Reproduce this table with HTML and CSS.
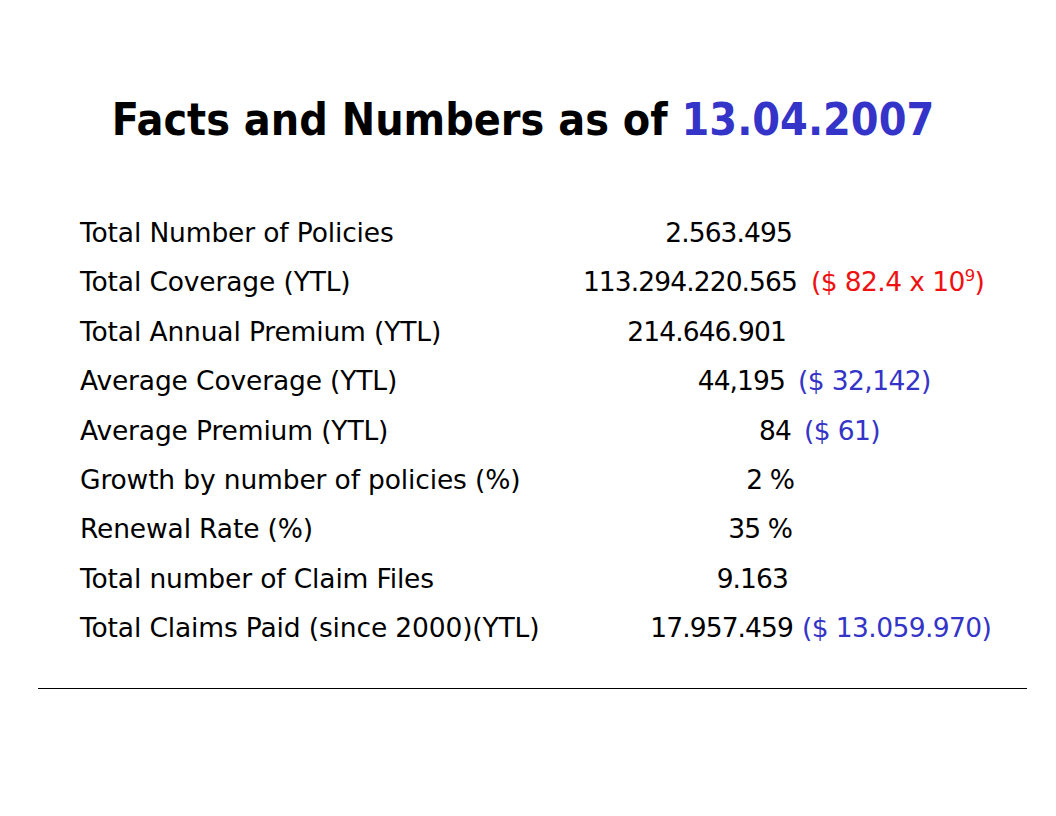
FILE: index.html
```html
<!DOCTYPE html>
<html>
<head>
<meta charset="utf-8">
<title>Facts and Numbers</title>
<link rel="stylesheet" href="styles.css">
</head>
<body>
<div class="slide">
  <h1 class="title">Facts and Numbers as of <span class="date">13.04.2007</span></h1>
  <div class="facts">
    <div class="label">Total Number of Policies</div>
    <div class="num">2.563.495</div>
    <div class="extra"></div>

    <div class="label">Total Coverage (YTL)</div>
    <div class="num shift-r5">113.294.220.565</div>
    <div class="extra red gap-19">($ 82.4 x 10<sup>9</sup>)</div>

    <div class="label">Total Annual Premium (YTL)</div>
    <div class="num shift-l6">214.646.901</div>
    <div class="extra"></div>

    <div class="label">Average Coverage (YTL)</div>
    <div class="num shift-l7">44,195</div>
    <div class="extra blue gap-6">($ 32,142)</div>

    <div class="label">Average Premium (YTL)</div>
    <div class="num shift-l1">84</div>
    <div class="extra blue gap-12">($ 61)</div>

    <div class="label">Growth by number of policies (%)</div>
    <div class="num shift-r2">2 %</div>
    <div class="extra"></div>

    <div class="label">Renewal Rate (%)</div>
    <div class="num">35 %</div>
    <div class="extra"></div>

    <div class="label">Total number of Claim Files</div>
    <div class="num shift-l4">9.163</div>
    <div class="extra"></div>

    <div class="label">Total Claims Paid (since 2000)(YTL)</div>
    <div class="num shift-r1">17.957.459</div>
    <div class="extra blue">($ 13.059.970)</div>
  </div>
  <hr class="rule">
</div>
</body>
</html>
```
FILE: styles.css
```css
html, body {
  margin: 0;
  padding: 0;
  background: #ffffff;
}

.slide {
  width: 1056px;
  height: 816px;
  padding-top: 98px;
  box-sizing: border-box;
  color: #000;
}

.title {
  margin: 0;
  padding-right: 10px;
  text-align: center;
  font-family: "DejaVu Sans Condensed", "DejaVu Sans", sans-serif;
  font-weight: bold;
  font-size: 44.4px;
  line-height: 44px;
  color: #000;
}

.date {
  color: #3434c8;
}

.facts {
  display: grid;
  grid-template-columns: 480px 232px auto;
  grid-auto-rows: 49.4px;
  margin-top: 66px;
  padding-left: 80px;
  font-family: "DejaVu Sans", sans-serif;
  font-size: 26.5px;
  line-height: 49.4px;
  white-space: nowrap;
}

.label {
  text-align: left;
  letter-spacing: -0.15px;
}

.num {
  text-align: right;
  letter-spacing: -0.9px;
}

.shift-r5 { margin-right: -5px; }
.shift-r2 { margin-right: -2px; }
.shift-r1 { margin-right: -1px; }
.shift-l1 { margin-right: 1px; }
.shift-l4 { margin-right: 4px; }
.shift-l6 { margin-right: 6px; }
.shift-l7 { margin-right: 7px; }

.extra {
  padding-left: 10px;
  letter-spacing: -0.6px;
}

.gap-6 { padding-left: 6px; }
.gap-12 { padding-left: 12px; }
.gap-19 { padding-left: 19px; }

.red { color: #ee1111; }
.blue { color: #3434c8; }

.extra sup {
  font-size: 0.62em;
  line-height: 0;
  vertical-align: 0.62em;
}

.rule {
  margin: 35px 0 0 38px;
  width: 989px;
  height: 0;
  border: 0;
  border-top: 1px solid #000;
}
```
